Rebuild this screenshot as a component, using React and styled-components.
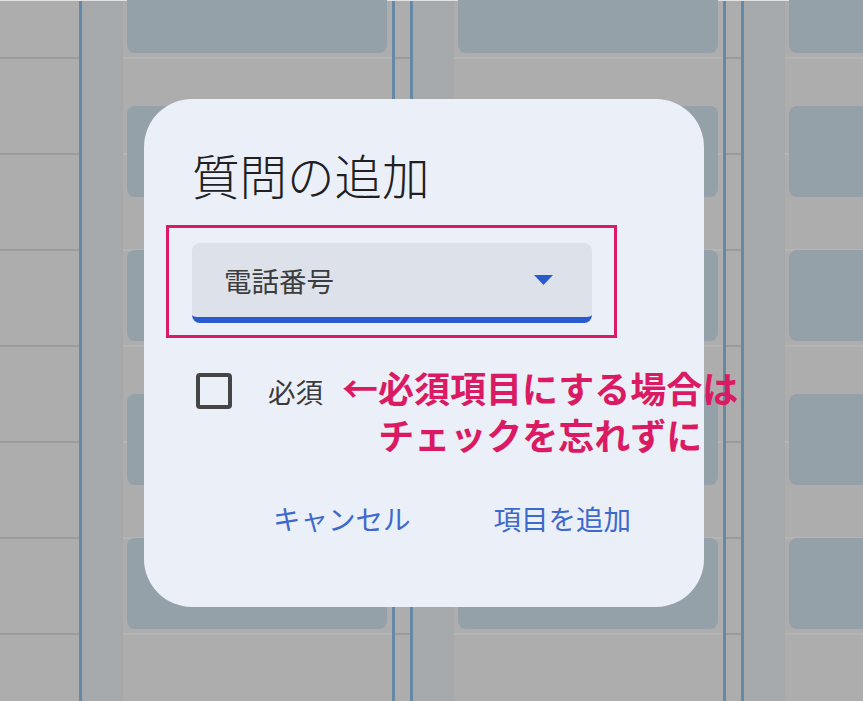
import React from "react";
import styled, { createGlobalStyle } from "styled-components";

const GlobalStyle = createGlobalStyle`
  html, body {
    margin: 0;
    padding: 0;
    background: #adadad;
  }
  body {
    font-family: "Noto Sans CJK JP", "Noto Sans", sans-serif;
  }
`;

const rowLines = (color) => `
  repeating-linear-gradient(
    to bottom,
    transparent 0 56px,
    ${color} 56px 58px,
    transparent 58px 96px
  )
`;

const Page = styled.div`
  position: relative;
  width: 863px;
  height: 701px;
  overflow: hidden;
`;

const Board = styled.div`
  display: flex;
  height: 100%;
  box-sizing: border-box;
  border-top: 1px solid #e2e2e2;
  background: #adadad;
`;

const Gutter = styled.div`
  flex: none;
  width: ${(p) => p.$width}px;
  background: ${rowLines("#9b9b9d")};
`;

const Column = styled.div`
  flex: none;
  display: flex;
  width: 316px;
  box-sizing: border-box;
  border-left: 3px solid #6488a6;
  border-right: 3px solid #6488a6;
`;

const Strip = styled.div`
  flex: none;
  width: 41px;
  background: #a5a9ab;
`;

const Lane = styled.div`
  flex: 1;
  display: flex;
  flex-direction: column;
  gap: 53px;
  padding: 0 5px 0 4px;
  background: ${rowLines("rgba(255,255,255,0.1)")};
`;

const Card = styled.div`
  flex: none;
  height: 91px;
  border-radius: 8px;
  background: #95a1a9;
  &:first-child {
    margin-top: -39px;
  }
`;

const Dialog = styled.div`
  position: absolute;
  left: 144px;
  top: 99px;
  width: 560px;
  height: 508px;
  box-sizing: border-box;
  padding: 48px 48px 0;
  border-radius: 48px;
  background: #ebf0f8;
`;

const Title = styled.h2`
  margin: 0;
  font-size: 47.5px;
  line-height: 55px;
  font-weight: 300;
  color: #202022;
`;

const FieldWrap = styled.div`
  position: relative;
  width: 400px;
  margin-top: 41px;
`;

const Field = styled.div`
  display: flex;
  align-items: center;
  justify-content: space-between;
  height: 80px;
  box-sizing: border-box;
  padding: 0 39px 0 32px;
  border-bottom: 6px solid #2a5ad0;
  border-radius: 8px;
  background: #dde2ea;
  font-size: 27.5px;
  color: #3c3c3e;
`;

const Highlight = styled.div`
  position: absolute;
  top: -18px;
  left: -26px;
  right: -25px;
  bottom: -15px;
  border: 3.5px solid #da1a62;
  pointer-events: none;
`;

const Row = styled.div`
  position: relative;
  display: flex;
  align-items: center;
  height: 36px;
  margin-top: 50px;
`;

const Box = styled.div`
  width: 36px;
  height: 36px;
  box-sizing: border-box;
  margin-left: 4px;
  border: 4px solid #454547;
  border-radius: 4px;
`;

const Label = styled.span`
  margin-left: 36px;
  font-size: 27.5px;
  color: #3a3a3c;
`;

const Callout = styled.div`
  position: absolute;
  left: 150px;
  top: -9px;
  font-size: 36px;
  line-height: 47px;
  font-weight: 700;
  text-align: center;
  white-space: nowrap;
  color: #da1a62;
`;

const Actions = styled.div`
  display: flex;
  justify-content: flex-end;
  gap: 33px;
  margin-top: 81px;
`;

const TextButton = styled.button`
  height: 56px;
  padding: 0 25px;
  border: none;
  background: transparent;
  font-family: inherit;
  font-size: 27.5px;
  color: #3d68cc;
  cursor: pointer;
`;

function BoardColumn() {
  return (
    <Column>
      <Strip />
      <Lane>
        {[0, 1, 2, 3, 4].map((i) => (
          <Card key={i} />
        ))}
      </Lane>
    </Column>
  );
}

export default function App() {
  return (
    <Page>
      <GlobalStyle />
      <Board>
        <Gutter $width={79} />
        <BoardColumn />
        <Gutter $width={15} />
        <BoardColumn />
        <Gutter $width={15} />
        <BoardColumn />
      </Board>

      <Dialog>
        <Title>質問の追加</Title>
        <FieldWrap>
          <Field>
            <span>電話番号</span>
            <svg width="19" height="10" viewBox="0 0 19 10">
              <polygon points="0,0 19,0 9.5,10" fill="#2a5ad0" />
            </svg>
          </Field>
          <Highlight />
        </FieldWrap>
        <Row>
          <Box />
          <Label>必須</Label>
          <Callout>
            ←必須項目にする場合は
            <br />
            チェックを忘れずに
          </Callout>
        </Row>
        <Actions>
          <TextButton>キャンセル</TextButton>
          <TextButton>項目を追加</TextButton>
        </Actions>
      </Dialog>
    </Page>
  );
}
